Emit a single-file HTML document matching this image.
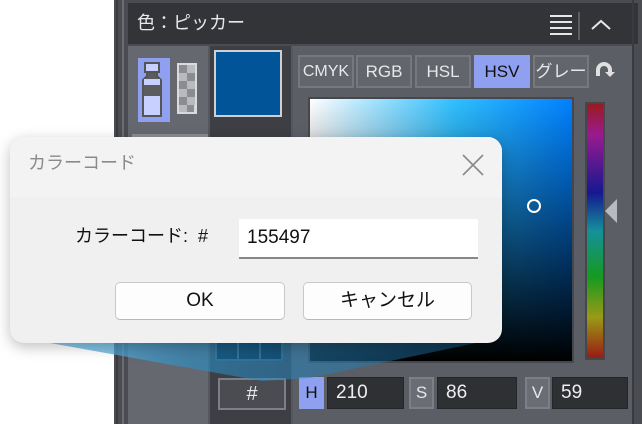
<!DOCTYPE html>
<html><head><meta charset="utf-8"><style>
*{margin:0;padding:0;box-sizing:border-box}
body{width:642px;height:424px;overflow:hidden;background:#fff;position:relative;font-family:"Liberation Sans","Noto Sans CJK JP",sans-serif}
.a{position:absolute}
.tab{position:absolute;top:55px;height:33px;width:56px;background:#62656c;border:2px solid #75787f;color:#e8e8e8;font-size:17px;text-align:center;line-height:29px}
.fld{position:absolute;top:377px;height:32px;background:#2f3034;border:1px solid #25262a;color:#eee;font-size:19px;line-height:30px;padding-left:8px}
.lab{position:absolute;top:377px;height:32px;width:25px;background:#6a6d74;border:2px solid #7c7f86;color:#e8e8e8;font-size:17px;text-align:center;line-height:28px}
.btn{position:absolute;top:282px;height:38px;background:#fdfdfd;border:1px solid #c8c8c8;border-bottom-color:#b8b8b8;border-radius:5px;text-align:center;font-size:19px;line-height:36px;color:#111}
</style></head><body>
<div class="a" style="left:114px;top:0;width:528px;height:424px;background:#4a4c52"></div>
<div class="a" style="left:116px;top:0;width:2px;height:424px;background:#3a3b40"></div>
<div class="a" style="left:122px;top:0;width:2px;height:424px;background:#6a6d73"></div>
<div class="a" style="left:128px;top:3px;width:510px;height:41px;background:#323437"></div>
<div class="a" style="left:137px;top:8px;color:#e8e8e8;font-size:18px;line-height:30px">色：ピッカー</div>
<svg class="a" style="left:548px;top:12px" width="70" height="28"><g stroke="#e6e6e6" stroke-width="2"><line x1="2" y1="4" x2="24" y2="4"/><line x1="2" y1="10" x2="24" y2="10"/><line x1="2" y1="16" x2="24" y2="16"/><line x1="2" y1="22" x2="24" y2="22"/></g><line x1="31" y1="0" x2="31" y2="28" stroke="#6a6c70" stroke-width="1.5"/><polyline points="44,17 53,9 62,17" fill="none" stroke="#e6e6e6" stroke-width="2"/></svg>
<div class="a" style="left:128px;top:46px;width:80px;height:378px;background:#65686f"></div>
<div class="a" style="left:208px;top:46px;width:2px;height:378px;background:#55585e"></div>
<div class="a" style="left:210px;top:46px;width:81px;height:378px;background:#3e3f44"></div>
<div class="a" style="left:291px;top:46px;width:2px;height:378px;background:#55585e"></div>
<div class="a" style="left:293px;top:46px;width:339px;height:378px;background:#5b5e65"></div>
<div class="a" style="left:632px;top:0;width:2px;height:424px;background:#3a3b40"></div>
<div class="a" style="left:138px;top:58px;width:32px;height:64px;background:#8fa0f0"></div>
<svg class="a" style="left:141px;top:62px" width="60" height="56"><rect x="4" y="1" width="14" height="9" fill="#c8d0ff" stroke="#555" stroke-width="2"/><path d="M6 10 L6 14 L2 18 L2 54 L20 54 L20 18 L16 14 L16 10Z" fill="#5b5c60" stroke="#555" stroke-width="2"/><rect x="3" y="17" width="16" height="6" fill="#c8d0ff"/><rect x="3" y="34" width="16" height="19" fill="#c8d0ff"/><rect x="36" y="1" width="20" height="51" fill="#d8dade"/><g fill="#8a8c92"><rect x="38" y="3" width="8" height="8"/><rect x="46" y="11" width="8" height="8"/><rect x="38" y="19" width="8" height="8"/><rect x="46" y="27" width="8" height="8"/><rect x="38" y="35" width="8" height="8"/><rect x="46" y="43" width="7" height="7"/></g><g fill="#b8bac0"><rect x="46" y="3" width="8" height="8"/><rect x="38" y="11" width="8" height="8"/><rect x="46" y="19" width="8" height="8"/><rect x="38" y="27" width="8" height="8"/><rect x="46" y="35" width="8" height="8"/><rect x="38" y="43" width="8" height="7"/></g></svg>
<div class="a" style="left:132px;top:134px;width:76px;height:3px;background:#8a8d93"></div>
<div class="a" style="left:214px;top:50px;width:68px;height:67px;background:#015498;border:2px solid #d0d0d0"></div>
<div class="tab" style="left:298px;font-size:16px">CMYK</div>
<div class="tab" style="left:356px">RGB</div>
<div class="tab" style="left:415px">HSL</div>
<div class="tab" style="left:474px;background:#8fa0f0;border-color:#8fa0f0;color:#111">HSV</div>
<div class="tab" style="left:533px">グレー</div>
<svg class="a" style="left:594px;top:60px" width="22" height="20"><path d="M4 16 V10 A6 6 0 0 1 16 10 V13" fill="none" stroke="#e0e0e0" stroke-width="4"/><path d="M11 12 L16 17 L21 12Z" fill="#e0e0e0"/></svg>
<div class="a" style="left:308px;top:97px;width:266px;height:266px;background:#45474c"></div>
<div class="a" style="left:310px;top:99px;width:262px;height:262px;background:linear-gradient(to bottom,rgba(0,0,0,0),#000),linear-gradient(to right,#fff,#30c0ff 55%,#0080ff)"></div>
<div class="a" style="left:527px;top:199px;width:14px;height:14px;border:2px solid #fff;border-radius:50%"></div>
<div class="a" style="left:585px;top:102px;width:20px;height:258px;background:#45474c"></div>
<div class="a" style="left:587px;top:104px;width:16px;height:254px;background:linear-gradient(to bottom,#9a1a20,#9a1a90 12%,#151890 35%,#15909a 50%,#159a20 68%,#9a9a15 84%,#9a1a15)"></div>
<svg class="a" style="left:603px;top:197px" width="16" height="28"><path d="M14 2 L2 14 L14 26Z" fill="#b8bac0"/></svg>
<div class="a" style="left:215px;top:340px;width:68px;height:21px;border:2px solid #3a5468;background:#021020"></div>
<div class="a" style="left:237px;top:340px;width:2px;height:21px;background:#3a5468"></div>
<div class="a" style="left:259px;top:340px;width:2px;height:21px;background:#3a5468"></div>
<div class="a" style="left:218px;top:378px;width:68px;height:32px;border:2px solid #7c7f86;background:#4a4c51;color:#e8e8e8;text-align:center;font-size:20px;line-height:28px">#</div>
<div class="lab" style="left:299px;background:#8fa0f0;border-color:#8fa0f0;color:#111">H</div>
<div class="fld" style="left:327px;width:77px">210</div>
<div class="lab" style="left:409px">S</div>
<div class="fld" style="left:437px;width:80px">86</div>
<div class="lab" style="left:525px">V</div>
<div class="fld" style="left:552px;width:76px">59</div>
<svg class="a" style="left:0;top:0" width="642" height="424"><defs><linearGradient id="g" x1="0" y1="0" x2="1" y2="0"><stop offset="0" stop-color="#7fc8ea" stop-opacity=".9"/><stop offset=".35" stop-color="#2a8fc8" stop-opacity=".6"/><stop offset="1" stop-color="#1b6ea8" stop-opacity=".4"/></linearGradient></defs><polygon points="22,338 500,338 310,378 262,381" fill="url(#g)"/></svg>
<div class="a" style="left:10px;top:137px;width:492px;height:206px;background:#f0f0f0;border-radius:14px;box-shadow:0 4px 14px rgba(0,0,0,.25)"></div>
<div class="a" style="left:10px;top:137px;width:492px;height:60px;background:#f3f3f3;border-radius:14px 14px 0 0"></div>
<div class="a" style="left:28px;top:149px;color:#8a8a8a;font-size:18px;line-height:28px">カラーコード</div>
<svg class="a" style="left:461px;top:153px" width="24" height="24"><path d="M2 2 L22 22 M22 2 L2 22" stroke="#8a8a8a" stroke-width="1.6"/></svg>
<div class="a" style="left:75px;top:222px;color:#111;font-size:18px;line-height:28px">カラーコード:&nbsp; #</div>
<div class="a" style="left:239px;top:219px;width:239px;height:40px;background:#fff;border-bottom:2px solid #888;color:#111;font-size:19px;line-height:38px;padding-left:8px">155497</div>
<div class="btn" style="left:115px;width:170px">OK</div>
<div class="btn" style="left:303px;width:169px">キャンセル</div>
</body></html>
